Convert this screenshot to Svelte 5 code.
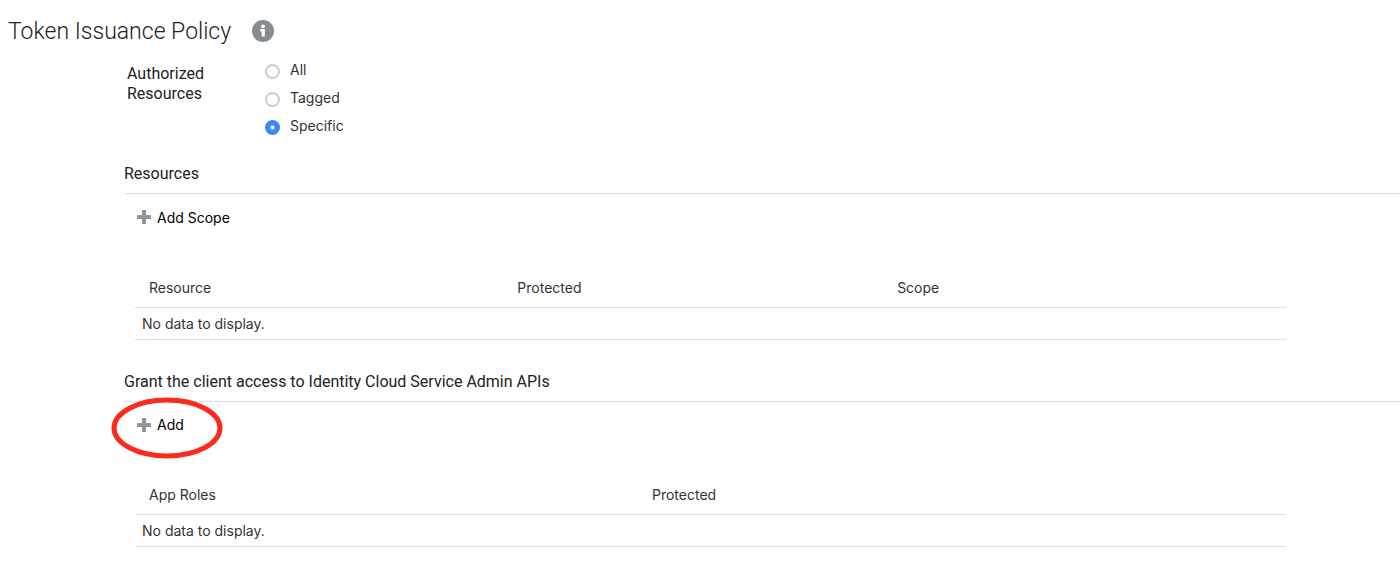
<script>
  const scopes = ['All', 'Tagged', 'Specific'];
  let selected = 'Specific';
</script>

<main>
  <header>
    <h1>Token Issuance Policy</h1>
    <button class="info" aria-label="About token issuance policy">
      <svg width="22" height="22" viewBox="0 0 22 22" aria-hidden="true">
        <circle cx="11" cy="11" r="11" fill="#878c90" />
        <circle cx="11" cy="6.300" r="1.900" fill="#fff" />
        <path d="M8.200 9h4.600v7.500H9.700v-5H8.200z" fill="#fff" />
      </svg>
    </button>
  </header>

  <fieldset>
    <legend>Authorized Resources</legend>
    <div class="options">
      {#each scopes as scope}
        <label><input type="radio" name="authorized" value={scope} bind:group={selected} /><span>{scope}</span></label>
      {/each}
    </div>
  </fieldset>

  <section>
    <h2>Resources</h2>
    <div class="toolbar">
      <button class="add">
        <svg width="14" height="14" viewBox="0 0 14 14" aria-hidden="true"><path d="M5 0h4v5h5v4H9v5H5V9H0V5h5z" fill="#929496" /></svg>
        Add Scope
      </button>
    </div>
    <table class="three">
      <thead><tr><th>Resource</th><th>Protected</th><th>Scope</th></tr></thead>
      <tbody><tr><td colspan="3">No data to display.</td></tr></tbody>
    </table>
  </section>

  <section>
    <h2>Grant the client access to Identity Cloud Service Admin APIs</h2>
    <div class="toolbar">
      <button class="add">
        <svg width="14" height="14" viewBox="0 0 14 14" aria-hidden="true"><path d="M5 0h4v5h5v4H9v5H5V9H0V5h5z" fill="#929496" /></svg>
        Add
      </button>
      <svg class="ring" width="112" height="62" viewBox="0 0 112 62" aria-hidden="true"><ellipse cx="56" cy="31" rx="53" ry="28" fill="none" stroke="#fb2a1c" stroke-width="5" /></svg>
    </div>
    <table class="two">
      <thead><tr><th>App Roles</th><th>Protected</th></tr></thead>
      <tbody><tr><td colspan="2">No data to display.</td></tr></tbody>
    </table>
  </section>
</main>

<style>
  :global(body) { margin: 0; background: #fff; }
  main { font-family: Inter, "Liberation Sans", sans-serif; font-size: 14px; color: #333; padding-top: 12px; }
  header { display: flex; align-items: center; gap: 21px; height: 38px; padding-left: 8px; }
  h1, h2, legend { font-family: Roboto, "Liberation Sans", sans-serif; color: #222; }
  h1 { margin: 0; font-size: 23px; font-weight: 300; }
  button { border: 0; padding: 0; background: none; font: inherit; }
  .info { display: flex; }
  fieldset { border: 0; margin: 0; padding: 7px 0 0 127px; display: flex; min-height: 96px; }
  legend { float: left; width: 138px; padding: 7px 40px 0 0; box-sizing: border-box; font-size: 16px; line-height: 20px; }
  .options { display: flex; flex-direction: column; }
  label { display: flex; align-items: center; gap: 10px; height: 28px; }
  label span { line-height: 20px; padding-bottom: 2px; }
  input { appearance: none; box-sizing: border-box; width: 15px; height: 15px; margin: 0; border: 2px solid #ccc; border-radius: 50%; background: #fff; }
  input:checked { border: 0; background: radial-gradient(circle, #fff 1px, #3b86fb 3px); }
  section { padding-left: 124px; }
  section + section { margin-top: 21px; }
  h2 { box-sizing: border-box; margin: 0; height: 41px; padding-top: 1px; line-height: 40px; border-bottom: 1px solid #dfdfdf; font-size: 16px; font-weight: 400; }
  .toolbar { position: relative; height: 75px; padding: 13px 0 0 13px; box-sizing: border-box; }
  .add { display: flex; align-items: center; gap: 6px; height: 20px; color: #000; }
  .ring { position: absolute; left: -13px; top: -5px; pointer-events: none; }
  table { width: calc(100% - 125px); margin-left: 11px; border-collapse: collapse; table-layout: fixed; }
  th { box-sizing: border-box; height: 38px; padding: 0 0 1px 14px; text-align: left; font-weight: 400; }
  .three th:first-child { width: 32%; }
  .three th:nth-child(2) { width: 33%; }
  .two th:first-child { width: 43.7%; }
  td { height: 31px; padding: 0 0 0 7px; border: solid #dfdfdf; border-width: 1px 0; }
</style>
